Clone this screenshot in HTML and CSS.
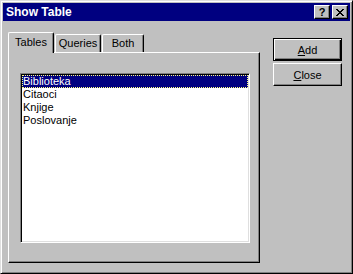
FILE: index.html
```html
<!DOCTYPE html>
<html lang="en">
<head>
    <meta charset="UTF-8">
    <title>Show Table</title>
    <link rel="stylesheet" href="styles.css">
</head>
<body>
    <div class="window">
        <div class="title-bar">
            <span class="title">Show Table</span>
            <div class="title-buttons">
                <button class="title-btn help">?</button>
                <button class="title-btn close">
                    <svg width="8" height="7" viewBox="0 0 8 7" shape-rendering="crispEdges">
                        <path d="M0 0h2v1h-2zM6 0h2v1h-2zM1 1h2v1h-2zM5 1h2v1h-2zM2 2h4v1h-4zM3 3h2v1h-2zM2 4h4v1h-4zM1 5h2v1h-2zM5 5h2v1h-2zM0 6h2v1h-2zM6 6h2v1h-2z" fill="#000"/>
                    </svg>
                </button>
            </div>
        </div>

        <div class="content">
            <div class="tab-control">
                <div class="tabs">
                    <div class="tab selected">Tables</div>
                    <div class="tab queries">Queries</div>
                    <div class="tab both">Both</div>
                </div>
                <div class="panel">
                    <ul class="listbox">
                        <li class="selected">Biblioteka</li>
                        <li>Citaoci</li>
                        <li>Knjige</li>
                        <li>Poslovanje</li>
                    </ul>
                </div>
            </div>

            <div class="actions">
                <button class="btn default"><u>A</u>dd</button>
                <button class="btn"><u>C</u>lose</button>
            </div>
        </div>
    </div>
</body>
</html>
```

FILE: styles.css
```css
body {
    margin: 0;
    background-color: #c0c0c0;
    font-family: "Liberation Sans", Arial, sans-serif;
    font-size: 11px;
    color: #000;
}
.window {
    width: 353px;
    height: 274px;
    box-sizing: border-box;
    background-color: #c0c0c0;
    border: 1px solid;
    border-color: #dfdfdf #000 #000 #dfdfdf;
    box-shadow: inset 1px 1px #fff, inset -1px -1px #808080;
    padding: 2px;
}
.title-bar {
    height: 18px;
    background-color: #000080;
    color: #fff;
    display: flex;
    align-items: center;
    justify-content: space-between;
    padding: 0 2px 0 3px;
}
.title {
    font-weight: bold;
    font-size: 12px;
}
.title-buttons {
    display: flex;
    gap: 2px;
}
.title-btn {
    width: 16px;
    height: 14px;
    padding: 0;
    box-sizing: border-box;
    background-color: #c0c0c0;
    border: 1px solid;
    border-color: #fff #000 #000 #fff;
    box-shadow: inset -1px -1px #808080;
    display: flex;
    align-items: center;
    justify-content: center;
    font-family: "Liberation Sans", Arial, sans-serif;
    font-weight: bold;
    font-size: 11px;
    line-height: 12px;
    color: #000;
}
.content {
    display: flex;
    padding: 11px 0 0 5px;
}
.tab-control {
    width: 252px;
}
.tabs {
    display: flex;
    align-items: flex-end;
    height: 20px;
}
.tab {
    box-sizing: border-box;
    height: 18px;
    padding-top: 2px;
    text-align: center;
    background-color: #c0c0c0;
    border-left: 1px solid #fff;
    border-top: 1px solid #fff;
    border-right: 1px solid #000;
    border-radius: 2px 2px 0 0;
    box-shadow: inset -1px 0 #808080;
}
.tab.selected {
    width: 46px;
    height: 21px;
    padding-top: 3px;
    margin-bottom: -1px;
    position: relative;
    z-index: 1;
}
.tab.queries {
    width: 46px;
    margin-left: 1px;
}
.tab.both {
    width: 42px;
    margin-left: 1px;
}
.panel {
    box-sizing: border-box;
    height: 211px;
    border: 1px solid;
    border-color: #fff #000 #000 #fff;
    box-shadow: inset -1px -1px #808080;
    padding: 20px 0 0 11px;
}
.listbox {
    list-style: none;
    margin: 0;
    box-sizing: border-box;
    width: 230px;
    height: 170px;
    padding: 1px;
    background-color: #fff;
    border: 1px solid;
    border-color: #808080 #fff #fff #808080;
    box-shadow: inset 1px 1px #000, inset -1px -1px #dfdfdf;
}
.listbox li {
    height: 13px;
    line-height: 13px;
    padding-left: 1px;
}
.listbox li.selected {
    background-color: #000080;
    color: #fff;
    outline: 1px dotted #ffff80;
    outline-offset: -1px;
}
.actions {
    display: flex;
    flex-direction: column;
    gap: 2px;
    margin: 6px 0 0 13px;
}
.btn {
    width: 69px;
    height: 23px;
    box-sizing: border-box;
    background-color: #c0c0c0;
    font-family: "Liberation Sans", Arial, sans-serif;
    font-size: 11px;
    color: #000;
    padding: 0;
    border: 1px solid;
    border-color: #fff #000 #000 #fff;
    box-shadow: inset -1px -1px #808080;
}
.btn.default {
    border-color: #000;
    box-shadow: inset 1px 1px #fff, inset -1px -1px #000, inset -2px -2px #808080;
}
```
